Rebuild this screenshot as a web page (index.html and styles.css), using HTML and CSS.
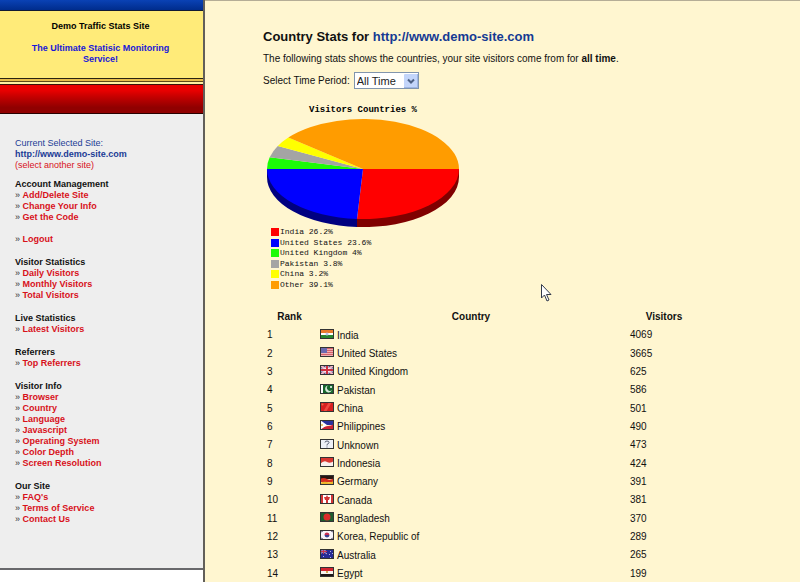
FILE: index.html
```
<!DOCTYPE html>
<html lang="en">
<head>
<meta charset="utf-8">
<title>Demo Traffic Stats Site</title>
<link rel="stylesheet" href="styles.css">
</head>
<body>
<div class="layout">
  <aside class="sidebar">
    <div class="bar-blue"></div>
    <header class="brand">
      <p>Demo Traffic Stats Site</p>
      <p class="slogan">The Ultimate Statisic Monitoring Service!</p>
    </header>
    <div class="stripe"></div>
    <div class="bar-red"></div>
    <nav class="menu">
      <p class="current">Current Selected Site:<br><strong>http://www.demo-site.com</strong><br><a href="#">(select another site)</a></p>
      <h2>Account Management</h2>
      <ul>
        <li><a href="#">Add/Delete Site</a></li>
        <li><a href="#">Change Your Info</a></li>
        <li><a href="#">Get the Code</a></li>
        <li class="apart"><a href="#">Logout</a></li>
      </ul>
      <h2>Visitor Statistics</h2>
      <ul>
        <li><a href="#">Daily Visitors</a></li>
        <li><a href="#">Monthly Visitors</a></li>
        <li><a href="#">Total Visitors</a></li>
      </ul>
      <h2>Live Statistics</h2>
      <ul>
        <li><a href="#">Latest Visitors</a></li>
      </ul>
      <h2>Referrers</h2>
      <ul>
        <li><a href="#">Top Referrers</a></li>
      </ul>
      <h2>Visitor Info</h2>
      <ul>
        <li><a href="#">Browser</a></li>
        <li><a href="#">Country</a></li>
        <li><a href="#">Language</a></li>
        <li><a href="#">Javascript</a></li>
        <li><a href="#">Operating System</a></li>
        <li><a href="#">Color Depth</a></li>
        <li><a href="#">Screen Resolution</a></li>
      </ul>
      <h2>Our Site</h2>
      <ul>
        <li><a href="#">FAQ's</a></li>
        <li><a href="#">Terms of Service</a></li>
        <li><a href="#">Contact Us</a></li>
      </ul>
    </nav>
  </aside>
  <main class="content">
    <h1>Country Stats for <span>http://www.demo-site.com</span></h1>
    <p class="intro">The following stats shows the countries, your site visitors come from for <b>all time</b>.</p>
    <form class="period">
      <label for="period">Select Time Period:</label>
      <span class="picker">
        <select id="period"><option>All Time</option></select>
        <svg class="arrow" width="14" height="14" viewBox="0 0 14 14" aria-hidden="true"><rect width="14" height="14" rx="1" fill="#c3d5fa"/><path d="M0 13.500H14M13.500 0V14" stroke="#9db5e4"/><path d="M4 5.500 7 8.500 10 5.500" fill="none" stroke="#4d6185" stroke-width="2"/></svg>
      </span>
    </form>
    <figure class="chart">
      <figcaption>Visitors Countries %</figcaption>
      <svg width="200" height="112" viewBox="0 0 200 112" aria-hidden="true">
        <path d="M4 54V62A96 50 0 0 0 94 112V104Z" fill="#000080"/>
        <path d="M196 54V62A96 50 0 0 1 94 112V104Z" fill="#800000"/>
        <path d="M100 54H196A96 50 0 0 1 94 103.900Z" fill="#f00"/>
        <path d="M100 54 94 103.900A96 50 0 0 1 4 54Z" fill="#00f"/>
        <path d="M100 54H4A96 50 0 0 1 6.700 42.200Z" fill="#1cfb08"/>
        <path d="M100 54 6.700 42.200A96 50 0 0 1 14.800 31Z" fill="#a4a4a4"/>
        <path d="M100 54 14.800 31A96 50 0 0 1 25.300 22.600Z" fill="#ff0"/>
        <path d="M100 54 25.300 22.600A96 50 0 0 1 196 54Z" fill="#ff9c00"/>
      </svg>
      <ul class="legend">
        <li class="red">India 26.2%</li>
        <li class="blue">United States 23.6%</li>
        <li class="green">United Kingdom 4%</li>
        <li class="gray">Pakistan 3.8%</li>
        <li class="yellow">China 3.2%</li>
        <li class="orange">Other 39.1%</li>
      </ul>
    </figure>
    <table>
      <thead><tr><th class="rank">Rank</th><th>Country</th><th class="visitors">Visitors</th></tr></thead>
      <tbody>
        <tr><td>1</td><td><svg class="flag" viewBox="0 0 14 10"><path fill="#e87a2c" d="M0 0h14v4H0z"/><path fill="#fff" d="M0 4h14v2H0z"/><path fill="#28852f" d="M0 6h14v4H0z"/><circle cx="7" cy="5" r="1.500" fill="#b9c3ea"/></svg>India</td><td>4069</td></tr>
        <tr><td>2</td><td><svg class="flag" viewBox="0 0 14 10"><path fill="#eeb0b4" d="M0 0h14v10H0z"/><path stroke="#d4606a" d="M0 1.500h14M0 3.500h14M0 5.500h14M0 7.500h14M0 9.500h14"/><path fill="#6a68b0" d="M0 0h7v6H0z"/></svg>United States</td><td>3665</td></tr>
        <tr><td>3</td><td><svg class="flag" viewBox="0 0 14 10"><path fill="#4d4a8c" d="M0 0h14v10H0z"/><path stroke="#f0b8c4" stroke-width="2" d="M0 0l14 10M14 0L0 10"/><path stroke="#fff" stroke-width="3" d="M7 0v10M0 5h14"/><path stroke="#cf3040" stroke-width="2" d="M7 0v10M0 5h14"/></svg>United Kingdom</td><td>625</td></tr>
        <tr><td>4</td><td><svg class="flag" viewBox="0 0 14 10"><path fill="#17652c" d="M0 0h14v10H0z"/><path fill="#fff" d="M0 0h3v10H0z"/><path fill="#d8eadb" d="M8 1.500A3.500 3.500 0 1 0 12 6 3 3 0 1 1 8 1.500z"/><circle cx="11" cy="3" r="1" fill="#fff"/></svg>Pakistan</td><td>586</td></tr>
        <tr><td>5</td><td><svg class="flag" viewBox="0 0 14 10"><path fill="#d81f20" d="M0 0h14v10H0z"/><path fill="#ee4940" d="M3 10 9 0h3L6 10z"/><circle cx="2.500" cy="2.500" r="1" fill="#e5704a"/></svg>China</td><td>501</td></tr>
        <tr><td>6</td><td><svg class="flag" viewBox="0 0 14 10"><path fill="#29339f" d="M0 0h14v5H0z"/><path fill="#cd2335" d="M0 9Q5 6 8 6t6-2v6H0z"/><path fill="#fff" d="M0 0l7 5-7 5z"/><circle cx="2" cy="5" r="1" fill="#e4c04c"/></svg>Philippines</td><td>490</td></tr>
        <tr><td>7</td><td><svg class="flag" viewBox="0 0 14 10"><path fill="#eef0f6" d="M0 0h14v10H0z"/><path fill="none" stroke="#555a70" d="M5 3.500q0-1.500 2-1.500t2 1.500q0 1-2 2V6.500M7 7.500V8.500"/></svg>Unknown</td><td>473</td></tr>
        <tr><td>8</td><td><svg class="flag" viewBox="0 0 14 10"><path fill="#d93832" d="M0 0h14v6H0z"/><path fill="#f9efed" d="M0 7Q4 3 7 5t7-1v6H0z"/></svg>Indonesia</td><td>424</td></tr>
        <tr><td>9</td><td><svg class="flag" viewBox="0 0 14 10"><path fill="#291511" d="M0 0h14v4H0z"/><path fill="#d32e20" d="M0 4q4-2 7 0t7-1v4H0z"/><path fill="#edb52b" d="M0 8q4-2 7-1t7-1v4H0z"/></svg>Germany</td><td>391</td></tr>
        <tr><td>10</td><td><svg class="flag" viewBox="0 0 14 10"><path fill="#d33434" d="M0 0h14v10H0z"/><path fill="#fff" d="M3 0h8v10H3z"/><path fill="#d33434" d="M7 1l1 2 2 0-1 3H8v3H6V6H5L4 3h2z"/></svg>Canada</td><td>381</td></tr>
        <tr><td>11</td><td><svg class="flag" viewBox="0 0 14 10"><path fill="#1d5c2d" d="M0 0h14v10H0z"/><circle cx="7" cy="5" r="3.500" fill="#db2c2b"/></svg>Bangladesh</td><td>370</td></tr>
        <tr><td>12</td><td><svg class="flag" viewBox="0 0 14 10"><path fill="#f7f4fa" d="M0 0h14v10H0z"/><path fill="#c62f53" d="M4.500 5a2.500 2.500 0 0 1 5 0z"/><path fill="#3c3e91" d="M4.500 5a2.500 2.500 0 0 0 5 0z"/><path stroke="#696581" d="M1 2l2-1M11 1l2 1M1 8l2 1M11 9l2-1"/></svg>Korea, Republic of</td><td>289</td></tr>
        <tr><td>13</td><td><svg class="flag" viewBox="0 0 14 10"><path fill="#272b96" d="M0 0h14v10H0z"/><path stroke="#c9a9c8" d="M0 0l7 5M7 0L0 5"/><path stroke="#c43450" d="M3.500 0v5M0 2.500h7"/><path fill="#aeb3e5" d="M3 7h1v1H3zM10 2h1v1h-1zM9 5h1v1H9zM12 4h1v1h-1zM10 8h1v1h-1z"/></svg>Australia</td><td>265</td></tr>
        <tr><td>14</td><td><svg class="flag" viewBox="0 0 14 10"><path fill="#d22630" d="M0 0h14v4H0z"/><path fill="#f8f4ee" d="M0 4h14v3H0z"/><path fill="#1f1717" d="M0 7h14v3H0z"/><path fill="#d3ac55" d="M6 4h2v2H6z"/></svg>Egypt</td><td>199</td></tr>
      </tbody>
    </table>
  </main>
</div>
<svg class="pointer" width="12" height="19" viewBox="0 0 12 19" aria-hidden="true"><path d="M.5 .5V14l3-3 2.500 6 2-1-2.500-5.500H10z" fill="#fff" stroke="#333b4d"/></svg>
</body>
</html>
```
FILE: styles.css
```
* { box-sizing: border-box; }

body {
  margin: 0;
  font-family: "Liberation Sans", Arial, sans-serif;
  font-size: 10px;
  line-height: 12px;
  color: #111;
  background: #fff;
}

h1, h2, p, ul, figure { margin: 0; padding: 0; }
ul { list-style: none; }
a { color: #d8111b; text-decoration: none; }

.layout {
  display: grid;
  grid-template-columns: 205px 1fr;
  min-height: 100vh;
}

/* sidebar */
.sidebar {
  font-size: 9px;
  line-height: 11px;
  border-right: 2px solid #625f59;
}
.bar-blue {
  height: 11px;
  background: linear-gradient(#0a42b5, #002c8c);
  border-bottom: 1px solid #111a33;
}
.brand {
  display: flex;
  flex-direction: column;
  gap: 11px;
  height: 67px;
  padding: 10px 26px 0 24px;
  background: #ffeb79;
  font-weight: bold;
  text-align: center;
  color: #000;
}
.slogan { color: #1818d8; }
.stripe {
  height: 7px;
  background: linear-gradient(#2b2411 1px, #e7bd4b 1px 3px, #5d4917 3px 4px, #fff0a0 4px 6px, #39120b 6px);
}
.bar-red {
  height: 29px;
  background: linear-gradient(#e80000 20%, #c80000 40%, #900000 80%);
  border-bottom: 1px solid #290000;
}
.menu {
  padding: 24px 15px 43px;
  background: #eee;
  border-bottom: 2px solid #68686b;
}
.menu h2 {
  margin-top: 12px;
  font-size: 9px;
  line-height: 11px;
  color: #111;
}
.menu .current + h2 { margin-top: 8px; }
.current { color: #1c3c96; }
.menu li { font-weight: bold; }
.menu li::before {
  content: "» ";
  font-weight: normal;
  color: #333;
}
.menu .apart { margin-top: 11px; }

/* content */
.content {
  padding: 28px 98px 0 58px;
  background: #fff6d0;
  border-top: 1px solid #b5ad96;
}
h1 {
  font-size: 13px;
  line-height: 16px;
}
h1 span { color: #153a93; }
.intro { margin-top: 8px; }
.period {
  display: flex;
  align-items: center;
  gap: 4px;
  margin-top: 7px;
}
.picker { position: relative; display: flex; }
select {
  appearance: none;
  width: 65px;
  height: 17px;
  padding: 0 2px;
  font: 11px "Liberation Sans", Arial, sans-serif;
  color: #222;
  background: #fff;
  border: 1px solid #8195ad;
  border-radius: 0;
}
.arrow {
  position: absolute;
  top: 2px;
  right: 1px;
  pointer-events: none;
}

/* chart */
.chart {
  width: 200px;
  margin-top: 17px;
  font-family: "Liberation Mono", monospace;
}
.chart svg { display: block; }
figcaption {
  font-size: 9px;
  font-weight: bold;
  line-height: 9px;
  text-align: center;
  color: #000;
}
.legend {
  display: grid;
  grid-auto-rows: 1fr;
  height: 63px;
  padding-left: 8px;
  font-size: 8px;
  line-height: 10px;
}
.legend li { display: flex; align-items: center; gap: 1px; }
.legend li::before { content: ""; width: 8px; height: 8px; background: currentColor; }
.red::before { color: #f00; }
.blue::before { color: #00f; }
.green::before { color: #1cfb08; }
.gray::before { color: #a4a4a4; }
.yellow::before { color: #ff0; }
.orange::before { color: #ff9c00; }

/* table */
table {
  width: 100%;
  height: 278px;
  margin-top: 16px;
  table-layout: fixed;
  border-spacing: 2px;
}
th, td { padding: 0 2px; }
th { height: 17px; }
td { text-align: left; }
.rank { width: 49px; }
.visitors { width: 72px; }
.flag {
  width: 14px;
  height: 10px;
  margin: 0 3px 0 2px;
  vertical-align: 0;
  outline: 1px solid #333;
  outline-offset: -1px;
}

.pointer {
  position: absolute;
  left: 541px;
  top: 284px;
}
```
